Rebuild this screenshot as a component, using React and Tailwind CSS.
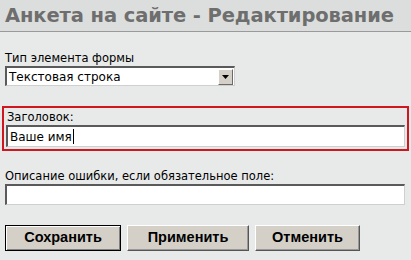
import React from 'react';

const font = { fontFamily: '"DejaVu Sans", Verdana, sans-serif' };

function Field({ value }) {
  return (
    <div className="h-[21px] bg-white border-t-2 border-l-2 border-t-[#5a5a5a] border-l-[#5a5a5a] border-r border-b border-r-[#cfcfcf] border-b-[#cfcfcf] flex items-center pl-[2px] text-[12px] text-black">
      {value}
    </div>
  );
}

export default function App() {
  return (
    <div className="w-[411px] h-[260px] bg-[#e8eaea] overflow-hidden" style={font}>
      {/* Header */}
      <div className="h-[32px] bg-[#dcdedd] border-b border-[#9a9a9a] flex items-center pl-[5px]">
        <h1 className="text-[19.5px] font-bold text-[#6e6e6e] leading-none tracking-[-0.1px]">
          Анкета на сайте - Редактирование
        </h1>
      </div>

      <div className="px-[5px] pt-[18px]">
        {/* Type select */}
        <div className="text-[11.5px] text-black leading-[16px]">Тип элемента формы</div>
        <div className="w-[230px] h-[20px] bg-white border-t-2 border-l-2 border-t-[#5a5a5a] border-l-[#5a5a5a] border-r border-b border-r-[#cfcfcf] border-b-[#cfcfcf] flex items-center">
          <span className="flex-1 pl-[2px] text-[12px] text-black">Текстовая строка</span>
          <div className="w-[15px] h-[16px] mr-[1px] bg-[#d4d0c8] border border-t-white border-l-white border-r-[#6a6a6a] border-b-[#6a6a6a] flex items-center justify-center">
            <svg width="7" height="4" viewBox="0 0 7 4"><path d="M0 0h7L3.5 4z" fill="#000" /></svg>
          </div>
        </div>
      </div>

      {/* Highlighted title */}
      <div className="mx-[2px] mt-[20px] border-2 border-[#d0161e] px-[2px] pt-[2px] pb-[2px]">
        <div className="text-[11.5px] text-black leading-[14px] pl-[1px]">Заголовок:</div>
        <div className="mt-[1px]">
          <div className="h-[22px] bg-white border-t-2 border-l-2 border-t-[#5a5a5a] border-l-[#5a5a5a] border-r border-b border-r-[#cfcfcf] border-b-[#cfcfcf] flex items-center pl-[2px] text-[12px] text-black">
            Ваше имя<span className="inline-block w-[1px] h-[15px] bg-black ml-[1px]" />
          </div>
        </div>
      </div>

      <div className="px-[5px] pt-[17px]">
        <div className="text-[11.5px] text-black leading-[16px]">Описание ошибки, если обязательное поле:</div>
        <div className="w-[400px]">
          <Field value="" />
        </div>
      </div>

      {/* Buttons */}
      <div className="flex gap-[6px] px-[5px] pt-[20px]" style={{ fontFamily: '"Liberation Sans", Arial, sans-serif' }}>
        <button className="w-[116px] h-[26px] bg-[#d4d0c8] border border-black shadow-[inset_1px_1px_0_#fff,inset_-1px_-1px_0_#808080] text-[14.5px] font-bold text-black">
          Сохранить
        </button>
        <button className="w-[122px] h-[26px] bg-[#d4d0c8] border border-t-white border-l-white border-r-[#555] border-b-[#555] shadow-[inset_-1px_-1px_0_#999] text-[14.5px] font-bold text-black">
          Применить
        </button>
        <button className="w-[105px] h-[26px] bg-[#d4d0c8] border border-t-white border-l-white border-r-[#555] border-b-[#555] shadow-[inset_-1px_-1px_0_#999] text-[14.5px] font-bold text-black">
          Отменить
        </button>
      </div>
    </div>
  );
}
